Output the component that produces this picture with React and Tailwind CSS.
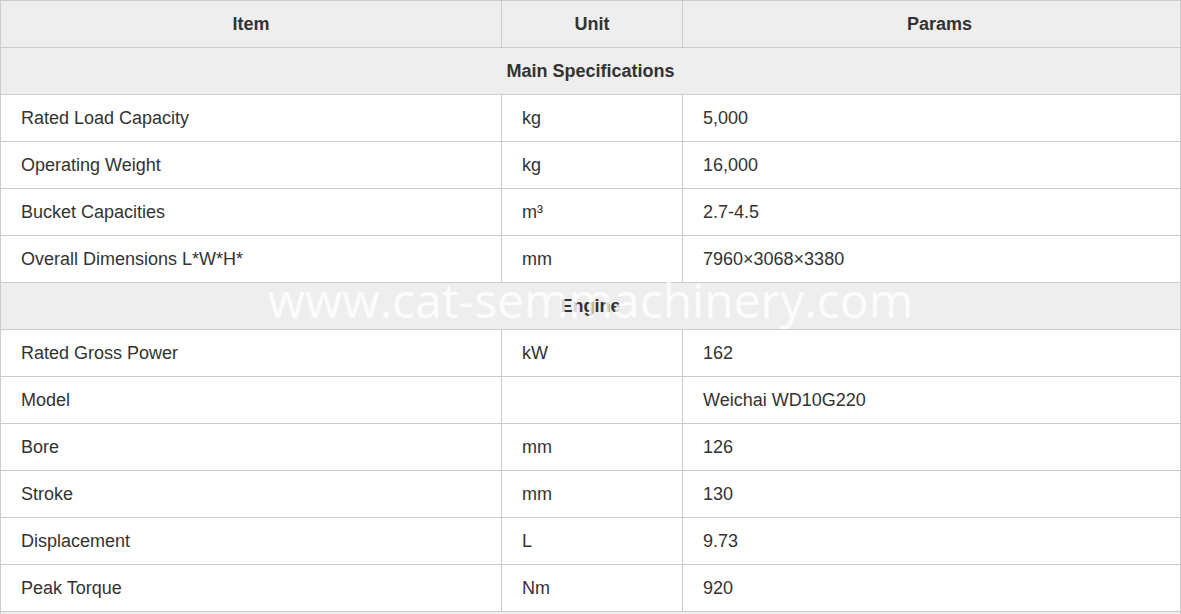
import React from 'react';

const rows = [
  { section: 'Main Specifications' },
  { item: 'Rated Load Capacity', unit: 'kg', value: '5,000' },
  { item: 'Operating Weight', unit: 'kg', value: '16,000' },
  { item: 'Bucket Capacities', unit: 'm³', value: '2.7-4.5' },
  { item: 'Overall Dimensions L*W*H*', unit: 'mm', value: '7960×3068×3380' },
  { section: 'Engine' },
  { item: 'Rated Gross Power', unit: 'kW', value: '162' },
  { item: 'Model', unit: '', value: 'Weichai WD10G220' },
  { item: 'Bore', unit: 'mm', value: '126' },
  { item: 'Stroke', unit: 'mm', value: '130' },
  { item: 'Displacement', unit: 'L', value: '9.73' },
  { item: 'Peak Torque', unit: 'Nm', value: '920' },
  { section: '' },
];

const cell = 'border border-[#cccccc] h-[47px] px-5 py-0 align-middle';

export default function App() {
  return (
    <div className="relative w-[1181px] bg-white text-[#333333] font-['Liberation_Sans',Arial,sans-serif] text-[18px]">
      <table className="w-full table-fixed border-collapse">
        <colgroup>
          <col className="w-[501px]" />
          <col className="w-[181px]" />
          <col />
        </colgroup>
        <thead>
          <tr className="bg-[#eeeeee]">
            <th className={`${cell} text-center font-bold`}>Item</th>
            <th className={`${cell} text-center font-bold`}>Unit</th>
            <th className={`${cell} text-center font-bold pl-[36px]`}>Params</th>
          </tr>
        </thead>
        <tbody>
          {rows.map((r, i) =>
            r.section !== undefined ? (
              <tr key={i} className="bg-[#eeeeee]">
                <td colSpan={3} className={`${cell} text-center font-bold`}>
                  {r.section}
                </td>
              </tr>
            ) : (
              <tr key={i}>
                <td className={cell}>{r.item}</td>
                <td className={cell}>{r.unit}</td>
                <td className={cell}>{r.value}</td>
              </tr>
            )
          )}
        </tbody>
      </table>

      {/* watermark */}
      <div className="pointer-events-none absolute left-0 right-0 top-[272px] text-center text-[48px] leading-[56px] text-white/80 font-['Open_Sans',sans-serif]">
        www.cat-semmachinery.com
      </div>
    </div>
  );
}
